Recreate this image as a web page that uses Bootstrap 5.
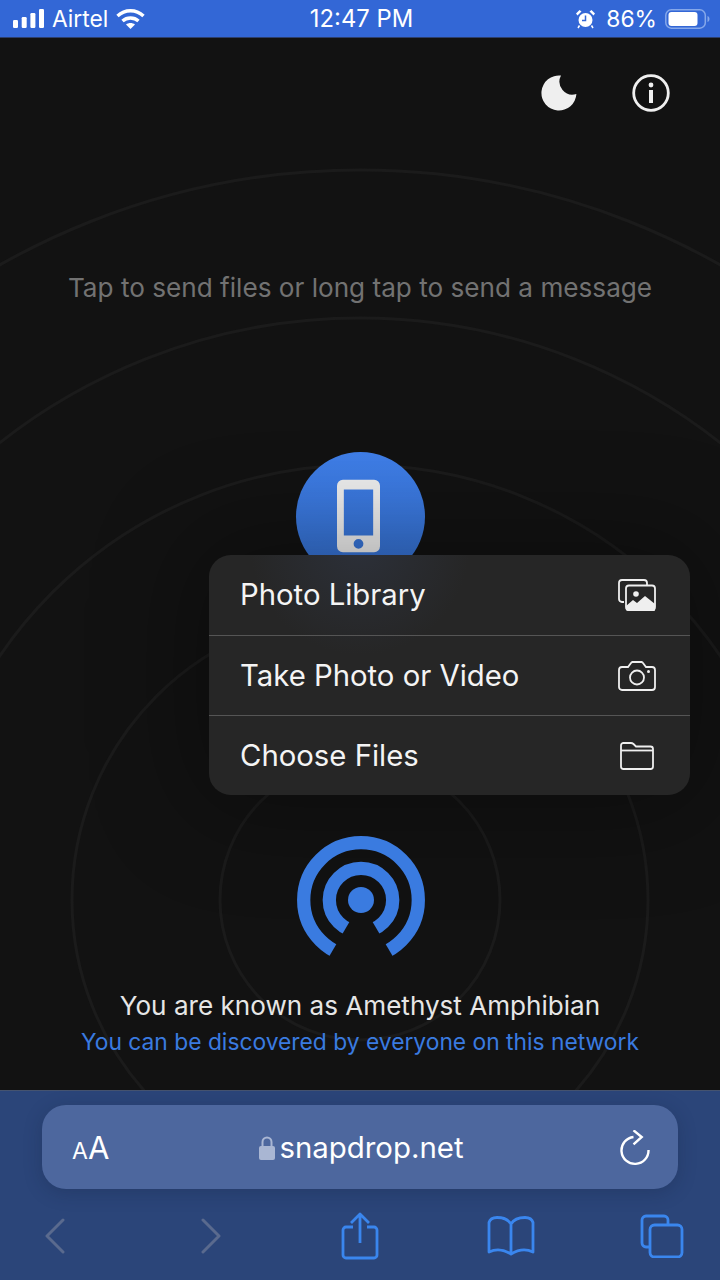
<!DOCTYPE html>
<html lang="en">
<head>
<meta charset="utf-8">
<title>Snapdrop</title>
<link href="https://cdn.jsdelivr.net/npm/bootstrap@5.3.0/dist/css/bootstrap.min.css" rel="stylesheet">
<style>
html,body{margin:0;width:720px;height:1280px;overflow:hidden;background:#121212}
body{font-family:Inter,"Noto Sans",sans-serif;color:#fff}
.phone-frame{width:720px;height:1280px}
.status-strip{height:38px;background:#3367d6;padding:0 10px 0 13px;font-size:22.8px;line-height:38px;border-bottom:1px solid #2c3e6b;flex:none}
.status-side{width:280px}
.status-gap{gap:8px}
.status-time{font-size:23.8px}
.alarm-glyph{margin-right:3px}
.page-area{height:1052px;background:#121212;flex:none;overflow:hidden}
.ring-canvas{position:absolute;left:0;top:0;width:720px;height:1052px}
.top-tools{padding:34px 50px 0 0;gap:55px;height:76px}
.hint-line{margin-top:158px;font-size:26.15px;line-height:32px;color:#727272;text-align:center;height:32px}
.device-disc{width:129px;height:129px;margin-top:148px;border-radius:50%;background:linear-gradient(#3f7ee8,#3470d0)}
.phone-glyph{margin-right:3px;margin-bottom:2px}
.sheet-menu{position:absolute;left:209px;top:517px;width:481px;height:240px;background:radial-gradient(circle 110px at 151px -10px,#2c3039,#262626);border-radius:22px;box-shadow:0 0 100px 20px rgba(0,0,0,.3)}
.sheet-row{height:80.5px;padding:1px 34px 0 31px;font-size:29.3px;color:#f4f4f4;border-bottom:1px solid #555}
.sheet-row:last-child{border-bottom:0;height:79px}
.folder-glyph{margin-right:2px}
.logo-wrap{margin-top:255px;flex:none}
.foot-text{margin-top:28px;text-align:center}
.known-line{font-size:26.1px;line-height:36px;color:#e6e6e6}
.discover-line{font-size:22.8px;line-height:36px;color:#3a7be0}
.browser-bar{height:190px;background:#2b4579;border-top:1px solid #45536f;flex:none}
.url-pill{height:84px;margin:14px 42px 0;padding:2px 27px 0 30px;background:#4d679e;border-radius:24px;box-shadow:0 4px 18px rgba(20,30,60,.25)}
.url-aa{width:60px}
.aa-small{font-size:23px}
.aa-big{font-size:31px}
.url-host{font-size:29.4px;line-height:40px}
.url-end{width:60px}
.nav-tools{padding:0 0 0 44px;height:94px}
.nav-tools svg{display:block}
.nav-b{margin-left:134px}
.nav-c{margin-left:119px}
.nav-d{margin-left:108px}
.nav-e{margin-left:105px}
</style>
</head>
<body>
<div class="phone-frame d-flex flex-column">
  <div class="status-strip d-flex align-items-center justify-content-between">
    <div class="status-side status-gap d-flex align-items-center">
      <svg width="31" height="19" viewBox="0 0 31 19" fill="#fff"><rect x="0" y="11" width="5" height="8" rx="1.200"/><rect x="8.700" y="8" width="5" height="11" rx="1.200"/><rect x="17.400" y="4" width="5" height="15" rx="1.200"/><rect x="26" y="0" width="5" height="19" rx="1.200"/></svg>
      <span>Airtel</span>
      <svg width="29" height="21" viewBox="0 0 29 21" fill="none" stroke="#fff" stroke-width="3.400"><path d="M1.500 8C9 1 20 1 27.500 8"/><path d="M6.500 13C11 9 18 9 22.500 13"/><path d="M14.500 21l-4.500-4.500c2.500-2 6.500-2 9 0z" fill="#fff" stroke="none"/></svg>
    </div>
    <div class="status-time">12:47 PM</div>
    <div class="status-side d-flex align-items-center justify-content-end gap-2">
      <svg class="alarm-glyph" width="19" height="20" viewBox="0 0 19 20"><circle cx="9.500" cy="11" r="7" fill="#fff"/><path d="M9.500 6.500v5H6" fill="none" stroke="#3367d6" stroke-width="1.500"/><path d="M0 4.500l3.500-3.500 2 1.500-4 4zM19 4.500l-3.500-3.500-2 1.500 4 4z" fill="#fff"/><path d="M3.500 16.500l-1.500 2.500M15.500 16.500l1.500 2.500" stroke="#fff" stroke-width="1.500"/></svg>
      <span>86%</span>
      <svg width="45" height="20" viewBox="0 0 45 20"><rect x=".8" y=".8" width="39.500" height="18.400" rx="5.500" fill="none" stroke="#86a8ea" stroke-width="1.500"/><rect x="3.500" y="3" width="29" height="14" rx="3" fill="#fff"/><path d="M42.500 7v6c1.500-.5 2-2 2-3s-.5-2.500-2-3z" fill="#86a8ea"/></svg>
    </div>
  </div>

  <div class="page-area position-relative d-flex flex-column align-items-center">
    <svg class="ring-canvas" viewBox="0 0 720 1052" fill="none" stroke="#1b1b1b" stroke-width="3">
      <circle cx="360" cy="862" r="140"/><circle cx="360" cy="862" r="288"/><circle cx="360" cy="862" r="435"/><circle cx="360" cy="862" r="582"/><circle cx="360" cy="862" r="730"/>
    </svg>
    <div class="top-tools position-relative w-100 d-flex justify-content-end align-items-center">
      <svg width="36" height="36" viewBox="0 0 36 36"><path d="M20 .6A17.500 17.500 0 1 0 35.400 19A13 13 0 0 1 20 .6z" fill="#efefef"/></svg>
      <svg width="38" height="38" viewBox="0 0 38 38"><circle cx="19" cy="19" r="17.300" fill="none" stroke="#efefef" stroke-width="2.800"/><circle cx="19" cy="11" r="2.400" fill="#efefef"/><rect x="17" y="16" width="4" height="13" fill="#efefef"/></svg>
    </div>
    <div class="hint-line position-relative">Tap to send files or long tap to send a message</div>
    <div class="device-disc position-relative d-flex align-items-center justify-content-center">
      <svg class="phone-glyph" width="43" height="74" viewBox="0 0 44 74"><path fill-rule="evenodd" d="M6 0h32a6 6 0 0 1 6 6v62a6 6 0 0 1-6 6H6a6 6 0 0 1-6-6V6a6 6 0 0 1 6-6zM7 10v47h30V10zM22 60.500a5 5 0 1 0 0 10 5 5 0 0 0 0-10z" fill="#ededed"/></svg>
    </div>
    <div class="sheet-menu d-flex flex-column">
      <div class="sheet-row d-flex align-items-center justify-content-between"><span>Photo Library</span>
        <svg width="38" height="32" viewBox="0 0 38 32"><path d="M6 23H4a3 3 0 0 1-3-3V4a3 3 0 0 1 3-3h22a3 3 0 0 1 3 3v2" fill="none" stroke="#efefef" stroke-width="1.800"/><rect x="8" y="6.500" width="29" height="24.500" rx="3" fill="none" stroke="#efefef" stroke-width="1.800"/><circle cx="18" cy="15" r="2.800" fill="#efefef"/><path d="M8 27l7-6 4 3 8-7 10 8v6a1 1 0 0 1-1 1H10a2 2 0 0 1-2-2z" fill="#efefef"/></svg></div>
      <div class="sheet-row d-flex align-items-center justify-content-between"><span>Take Photo or Video</span>
        <svg width="38" height="30" viewBox="0 0 38 30" fill="none" stroke="#efefef" stroke-width="1.800"><path d="M4 6h6l3-4a2 2 0 0 1 1.500-1h9a2 2 0 0 1 1.500 1l3 4h6a3 3 0 0 1 3 3v17a3 3 0 0 1-3 3H4a3 3 0 0 1-3-3V9a3 3 0 0 1 3-3z"/><circle cx="19" cy="16.500" r="7"/><circle cx="30.500" cy="10.500" r="1.500" fill="#efefef" stroke="none"/></svg></div>
      <div class="sheet-row d-flex align-items-center justify-content-between"><span>Choose Files</span>
        <svg class="folder-glyph" width="34" height="28" viewBox="0 0 34 28" fill="none" stroke="#efefef" stroke-width="1.800"><path d="M1 8V3.500A2.500 2.500 0 0 1 3.500 1H11c1 0 1.800.4 2.500 1L16 4.500h14.500A2.500 2.500 0 0 1 33 7v17.500a2.500 2.500 0 0 1-2.500 2.500h-27A2.500 2.500 0 0 1 1 24.500z"/><path d="M1 8.500h32"/></svg></div>
    </div>
    <svg class="logo-wrap position-relative" width="130" height="124" viewBox="0 0 130 124">
      <defs><mask id="logo-cut"><rect width="130" height="124" fill="#fff"/><path d="M66 66.200L25 136h82z" fill="#000"/></mask></defs>
      <g fill="none" stroke="#3a7be0" stroke-width="13.300" mask="url(#logo-cut)"><circle cx="66" cy="64" r="57.300"/><circle cx="66" cy="64" r="31.700"/></g>
      <circle cx="66" cy="64" r="13" fill="#3a7be0"/>
    </svg>
    <div class="foot-text position-relative">
      <div class="known-line">You are known as Amethyst Amphibian</div>
      <div class="discover-line">You can be discovered by everyone on this network</div>
    </div>
  </div>

  <div class="browser-bar">
    <div class="url-pill d-flex align-items-center justify-content-between">
      <div class="url-aa"><span class="aa-small">A</span><span class="aa-big">A</span></div>
      <div class="d-flex align-items-center gap-1">
        <svg width="16" height="25" viewBox="0 0 16 25"><path d="M3.500 11V6a4.500 4.500 0 0 1 9 0v5" fill="none" stroke="#a9b6d3" stroke-width="2"/><rect x="0" y="10" width="16" height="14" rx="2" fill="#a9b6d3"/></svg>
        <span class="url-host">snapdrop.net</span>
      </div>
      <div class="url-end d-flex justify-content-end">
        <svg width="31" height="36" viewBox="0 0 31 36" fill="none" stroke="#fff" stroke-width="2.400"><path d="M13.500 7A13.500 13.500 0 1 0 28.500 20"/><path d="M13.500 .3L21.700 7l-8.200 7.300"/></svg>
      </div>
    </div>
    <div class="nav-tools d-flex align-items-center">
      <svg width="22" height="36" viewBox="0 0 22 36" fill="none" stroke="#5a6a8e" stroke-width="3" stroke-linecap="round" stroke-linejoin="round"><path d="M19 2L3 18l16 16"/></svg>
      <svg class="nav-b" width="22" height="36" viewBox="0 0 22 36" fill="none" stroke="#5a6a8e" stroke-width="3" stroke-linecap="round" stroke-linejoin="round"><path d="M3 2l16 16L3 34"/></svg>
      <svg class="nav-c" width="38" height="48" viewBox="0 0 38 48" fill="none" stroke="#3a86ee" stroke-width="2.800" stroke-linejoin="round"><path d="M12 15H5a3 3 0 0 0-3 3v25a3 3 0 0 0 3 3h28a3 3 0 0 0 3-3V18a3 3 0 0 0-3-3h-7"/><path d="M19 31V3M10 11l9-9 9 9"/></svg>
      <svg class="nav-d" width="48" height="40" viewBox="0 0 48 40" fill="none" stroke="#3a86ee" stroke-width="2.800" stroke-linejoin="round"><path d="M24 8C21 3 16 1.500 10 1.500 6 1.500 3 3 2 6.500V36c6-3 14-3 22 2 8-5 16-5 22-2V6.500C45 3 42 1.500 38 1.500 32 1.500 27 3 24 8zV37"/></svg>
      <svg class="nav-e" width="44" height="44" viewBox="0 0 44 44" fill="none" stroke="#3a86ee" stroke-width="2.800"><path d="M10 33H6a4 4 0 0 1-4-4V6a4 4 0 0 1 4-4h18a4 4 0 0 1 4 4v4"/><rect x="10" y="11" width="32" height="32" rx="4.500"/></svg>
    </div>
  </div>
</div>
</body>
</html>
